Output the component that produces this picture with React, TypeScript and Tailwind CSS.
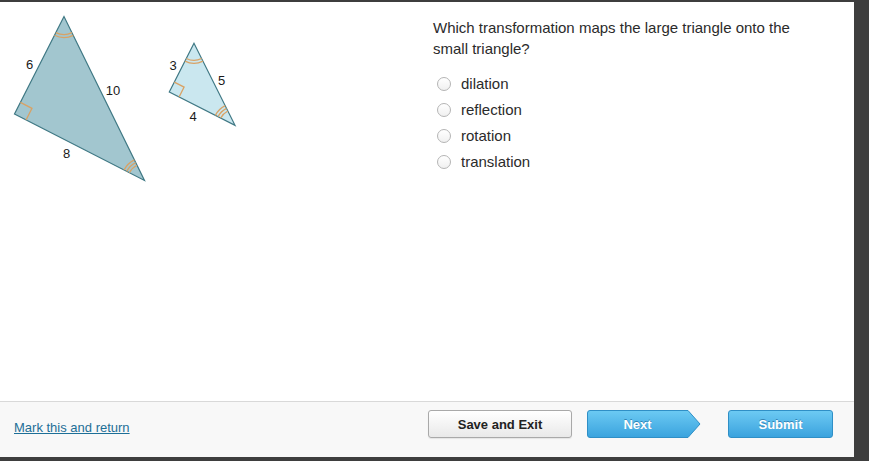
import React from "react";

type P = [number, number];

function arcPath(V: P, A: P, B: P, r: number): string {
  const a1 = Math.atan2(A[1] - V[1], A[0] - V[0]);
  const a2 = Math.atan2(B[1] - V[1], B[0] - V[0]);
  const s: P = [V[0] + r * Math.cos(a1), V[1] + r * Math.sin(a1)];
  const e: P = [V[0] + r * Math.cos(a2), V[1] + r * Math.sin(a2)];
  const u1 = [Math.cos(a1), Math.sin(a1)];
  const u2 = [Math.cos(a2), Math.sin(a2)];
  const cross = u1[0] * u2[1] - u1[1] * u2[0];
  const sweep = cross > 0 ? 1 : 0;
  return `M ${s[0].toFixed(2)} ${s[1].toFixed(2)} A ${r} ${r} 0 0 ${sweep} ${e[0].toFixed(2)} ${e[1].toFixed(2)}`;
}

function rightPath(V: P, A: P, B: P, s: number): string {
  const la = Math.hypot(A[0] - V[0], A[1] - V[1]);
  const lb = Math.hypot(B[0] - V[0], B[1] - V[1]);
  const ua: P = [(A[0] - V[0]) / la, (A[1] - V[1]) / la];
  const ub: P = [(B[0] - V[0]) / lb, (B[1] - V[1]) / lb];
  const p1: P = [V[0] + s * ua[0], V[1] + s * ua[1]];
  const p3: P = [V[0] + s * ub[0], V[1] + s * ub[1]];
  const p2: P = [p1[0] + s * ub[0], p1[1] + s * ub[1]];
  return `M ${p1[0].toFixed(2)} ${p1[1].toFixed(2)} L ${p2[0].toFixed(2)} ${p2[1].toFixed(2)} L ${p3[0].toFixed(2)} ${p3[1].toFixed(2)}`;
}

function Figure() {
  const LA: P = [64, 16.5];
  const LB: P = [14.5, 114];
  const LC: P = [144.5, 180.5];
  const SA: P = [194, 43.3];
  const SB: P = [169.3, 92];
  const SC: P = [235, 125.3];
  const orange = "#d9a265";
  const pts = (a: P, b: P, c: P) => `${a[0]},${a[1]} ${b[0]},${b[1]} ${c[0]},${c[1]}`;
  const labels: { t: string; x: number; y: number }[] = [
    { t: "6", x: 29.7, y: 64 },
    { t: "10", x: 113, y: 90.7 },
    { t: "8", x: 66.7, y: 153 },
    { t: "3", x: 173, y: 65.7 },
    { t: "5", x: 221.7, y: 80 },
    { t: "4", x: 193, y: 116.7 },
  ];
  return (
    <svg width="433" height="200" viewBox="0 2 433 200" className="block">
      <polygon points={pts(LA, LB, LC)} fill="#a2c6cf" stroke="#3f7884" strokeWidth="1.2" strokeLinejoin="miter" />
      <polygon points={pts(SA, SB, SC)} fill="#cae7ef" stroke="#3f7884" strokeWidth="1.2" />
      <g fill="none" stroke={orange} strokeWidth="1.3">
        <path d={arcPath(LA, LB, LC, 18)} />
        <path d={arcPath(LA, LB, LC, 21)} />
        <path d={rightPath(LB, LA, LC, 13)} />
        <path d={arcPath(LC, LA, LB, 17)} />
        <path d={arcPath(LC, LA, LB, 20)} />
        <path d={arcPath(LC, LA, LB, 23)} />
        <path d={arcPath(SA, SB, SC, 17)} />
        <path d={arcPath(SA, SB, SC, 20)} />
        <path d={rightPath(SB, SA, SC, 11)} />
        <path d={arcPath(SC, SA, SB, 16)} />
        <path d={arcPath(SC, SA, SB, 19)} />
        <path d={arcPath(SC, SA, SB, 22)} />
      </g>
      <g fontFamily="'Liberation Sans', Arial, sans-serif" fontSize="13" fill="#1a1a1a">
        {labels.map((l) => (
          <text key={l.t} x={l.x} y={l.y} textAnchor="middle" dominantBaseline="central">
            {l.t}
          </text>
        ))}
      </g>
    </svg>
  );
}

function Radio({ label }: { label: string }) {
  return (
    <div className="flex h-[26px] items-center">
      <span className="ml-[4px] block h-[14px] w-[14px] rounded-full border border-[#b5b5b5] bg-gradient-to-b from-[#ffffff] to-[#f0f0f0]" />
      <span className="ml-[10px] text-[15px] leading-[26px] text-[#2b2b2b]">{label}</span>
    </div>
  );
}

export default function App() {
  return (
    <div
      className="flex h-[461px] w-[869px] flex-col bg-[#3e3e3e] pt-[2px] pb-[4px] pr-[15px]"
      style={{ fontFamily: "'Liberation Sans', Arial, Helvetica, sans-serif" }}
    >
      <div className="flex h-[455px] w-[854px] flex-col bg-white">
        <div className="flex h-[399px]">
          <div className="w-[433px]">
            <Figure />
          </div>
          <div className="pt-[15px]">
            <p className="max-w-[380px] text-[15px] leading-[21px] text-[#2b2b2b]">
              Which transformation maps the large triangle onto the small triangle?
            </p>
            <div className="mt-[12px] flex flex-col">
              <Radio label="dilation" />
              <Radio label="reflection" />
              <Radio label="rotation" />
              <Radio label="translation" />
            </div>
          </div>
        </div>
        <div className="flex h-[56px] border-t border-[#d9d9d9] bg-[#f8f8f8]">
          <div className="flex h-full items-center pl-[14px] pb-[5px]">
            <a className="text-[13px] leading-none text-[#1d6f97] underline" href="#">
              Mark this and return
            </a>
          </div>
          <div className="ml-auto flex items-start pt-[8px] pr-[21px]">
            <button className="flex h-[28px] w-[144px] items-center justify-center rounded-[3px] border border-[#a9a9a9] bg-gradient-to-b from-[#ffffff] to-[#e9e9e9] pt-[2px] text-[13px] font-bold text-[#222] shadow-[0_1px_1px_rgba(0,0,0,0.08)]">
              Save and Exit
            </button>
            <button className="relative ml-[15px] h-[28px] w-[114px]">
              <svg className="absolute inset-0" width="114" height="28" viewBox="0 0 114 28">
                <defs>
                  <linearGradient id="nb" x1="0" y1="0" x2="0" y2="1">
                    <stop offset="0" stopColor="#6ccaf3" />
                    <stop offset="1" stopColor="#3aa3de" />
                  </linearGradient>
                </defs>
                <path
                  d="M 3 0.5 L 101 0.5 L 113 14 L 101 27.5 L 3 27.5 Q 0.5 27.5 0.5 25 L 0.5 3 Q 0.5 0.5 3 0.5 Z"
                  fill="url(#nb)"
                  stroke="#2f8fc6"
                  strokeWidth="1"
                />
              </svg>
              <span className="relative flex h-full w-[101px] items-center justify-center pt-[2px] text-[13px] font-bold text-white [text-shadow:0_-1px_0_rgba(0,60,110,0.45)]">
                Next
              </span>
            </button>
            <button className="ml-[27px] flex h-[28px] w-[105px] items-center justify-center rounded-[3px] border border-[#2f8fc6] bg-gradient-to-b from-[#6ccaf3] to-[#3aa3de] pt-[2px] text-[13px] font-bold text-white [text-shadow:0_-1px_0_rgba(0,60,110,0.45)]">
              Submit
            </button>
          </div>
        </div>
      </div>
    </div>
  );
}
